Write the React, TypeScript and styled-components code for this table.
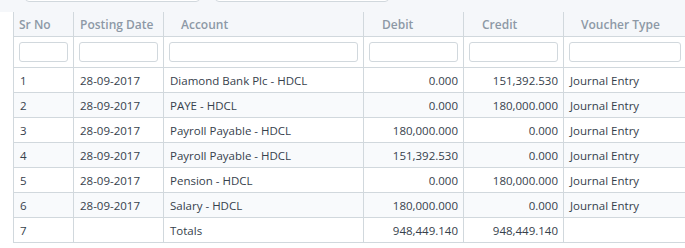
import React from 'react';
import styled, { createGlobalStyle } from 'styled-components';

const GlobalStyle = createGlobalStyle`
    body {
        margin: 0;
        background: #ffffff;
        font-family: "Open Sans", "Noto Sans", sans-serif;
        color: #36414c;
    }
`;

const Page = styled.div`
    width: 685px;
    height: 248px;
    overflow: hidden;
`;

const Toolbar = styled.div`
    height: 12px;
    overflow: hidden;
    background: #f5f7fa;
    display: flex;
    gap: 15px;
    padding-left: 25px;
`;

const ToolbarInput = styled.div<{ $width: number }>`
    width: ${(p) => p.$width}px;
    height: 26px;
    margin-top: -24px;
    box-sizing: border-box;
    background: #ffffff;
    border: 1px solid #d1d8dd;
    border-radius: 4px;
    flex-shrink: 0;
`;

const Table = styled.table`
    margin-left: 13px;
    border-collapse: collapse;
    table-layout: fixed;
    width: 673px;
    font-size: 11.5px;
`;

const HeadCell = styled.th<{ $pad: number }>`
    height: 24px;
    padding: 0 4px 0 ${(p) => p.$pad}px;
    text-align: left;
    font-weight: 600;
    font-size: 12px;
    color: #8d99a6;
    background: #f5f7fa;
    border: 1px solid #d1d8dd;
    border-top: none;
    white-space: nowrap;
`;

const FilterCell = styled.td`
    height: 30px;
    padding: 0 5px;
    border: 1px solid #d1d8dd;
    background: #ffffff;
`;

const FilterInput = styled.div`
    height: 20px;
    box-sizing: border-box;
    border: 1px solid #d1d8dd;
    border-radius: 3px;
    background: #ffffff;
`;

const Row = styled.tr<{ $tint: boolean }>`
    background: ${(p) => (p.$tint ? '#f8fafc' : '#ffffff')};
`;

const Cell = styled.td<{ $right?: boolean }>`
    height: 24px;
    padding: 0 5px 0 6px;
    text-align: ${(p) => (p.$right ? 'right' : 'left')};
    border: 1px solid #d1d8dd;
    white-space: nowrap;
    overflow: hidden;
`;

const columns = [
    { title: 'Sr No', width: 60, pad: 5 },
    { title: 'Posting Date', width: 90, pad: 6 },
    { title: 'Account', width: 200, pad: 17 },
    { title: 'Debit', width: 100, pad: 18 },
    { title: 'Credit', width: 100, pad: 18 },
    { title: 'Voucher Type', width: 123, pad: 17 },
];

const rows = [
    ['1', '28-09-2017', 'Diamond Bank Plc - HDCL', '0.000', '151,392.530', 'Journal Entry'],
    ['2', '28-09-2017', 'PAYE - HDCL', '0.000', '180,000.000', 'Journal Entry'],
    ['3', '28-09-2017', 'Payroll Payable - HDCL', '180,000.000', '0.000', 'Journal Entry'],
    ['4', '28-09-2017', 'Payroll Payable - HDCL', '151,392.530', '0.000', 'Journal Entry'],
    ['5', '28-09-2017', 'Pension - HDCL', '0.000', '180,000.000', 'Journal Entry'],
    ['6', '28-09-2017', 'Salary - HDCL', '180,000.000', '0.000', 'Journal Entry'],
    ['7', '', 'Totals', '948,449.140', '948,449.140', ''],
];

export default function App() {
    return (
        <Page>
            <GlobalStyle />
            <Toolbar>
                <ToolbarInput $width={175} />
                <ToolbarInput $width={174} />
            </Toolbar>
            <Table>
                <colgroup>
                    {columns.map((c) => (
                        <col key={c.title} style={{ width: c.width }} />
                    ))}
                </colgroup>
                <thead>
                    <tr>
                        {columns.map((c) => (
                            <HeadCell key={c.title} $pad={c.pad}>
                                {c.title}
                            </HeadCell>
                        ))}
                    </tr>
                    <tr>
                        {columns.map((c) => (
                            <FilterCell key={c.title}>
                                <FilterInput />
                            </FilterCell>
                        ))}
                    </tr>
                </thead>
                <tbody>
                    {rows.map((r, i) => (
                        <Row key={r[0]} $tint={i % 2 === 1 && i < 6}>
                            {r.map((v, j) => (
                                <Cell key={j} $right={j === 3 || j === 4}>
                                    {v}
                                </Cell>
                            ))}
                        </Row>
                    ))}
                </tbody>
            </Table>
        </Page>
    );
}
